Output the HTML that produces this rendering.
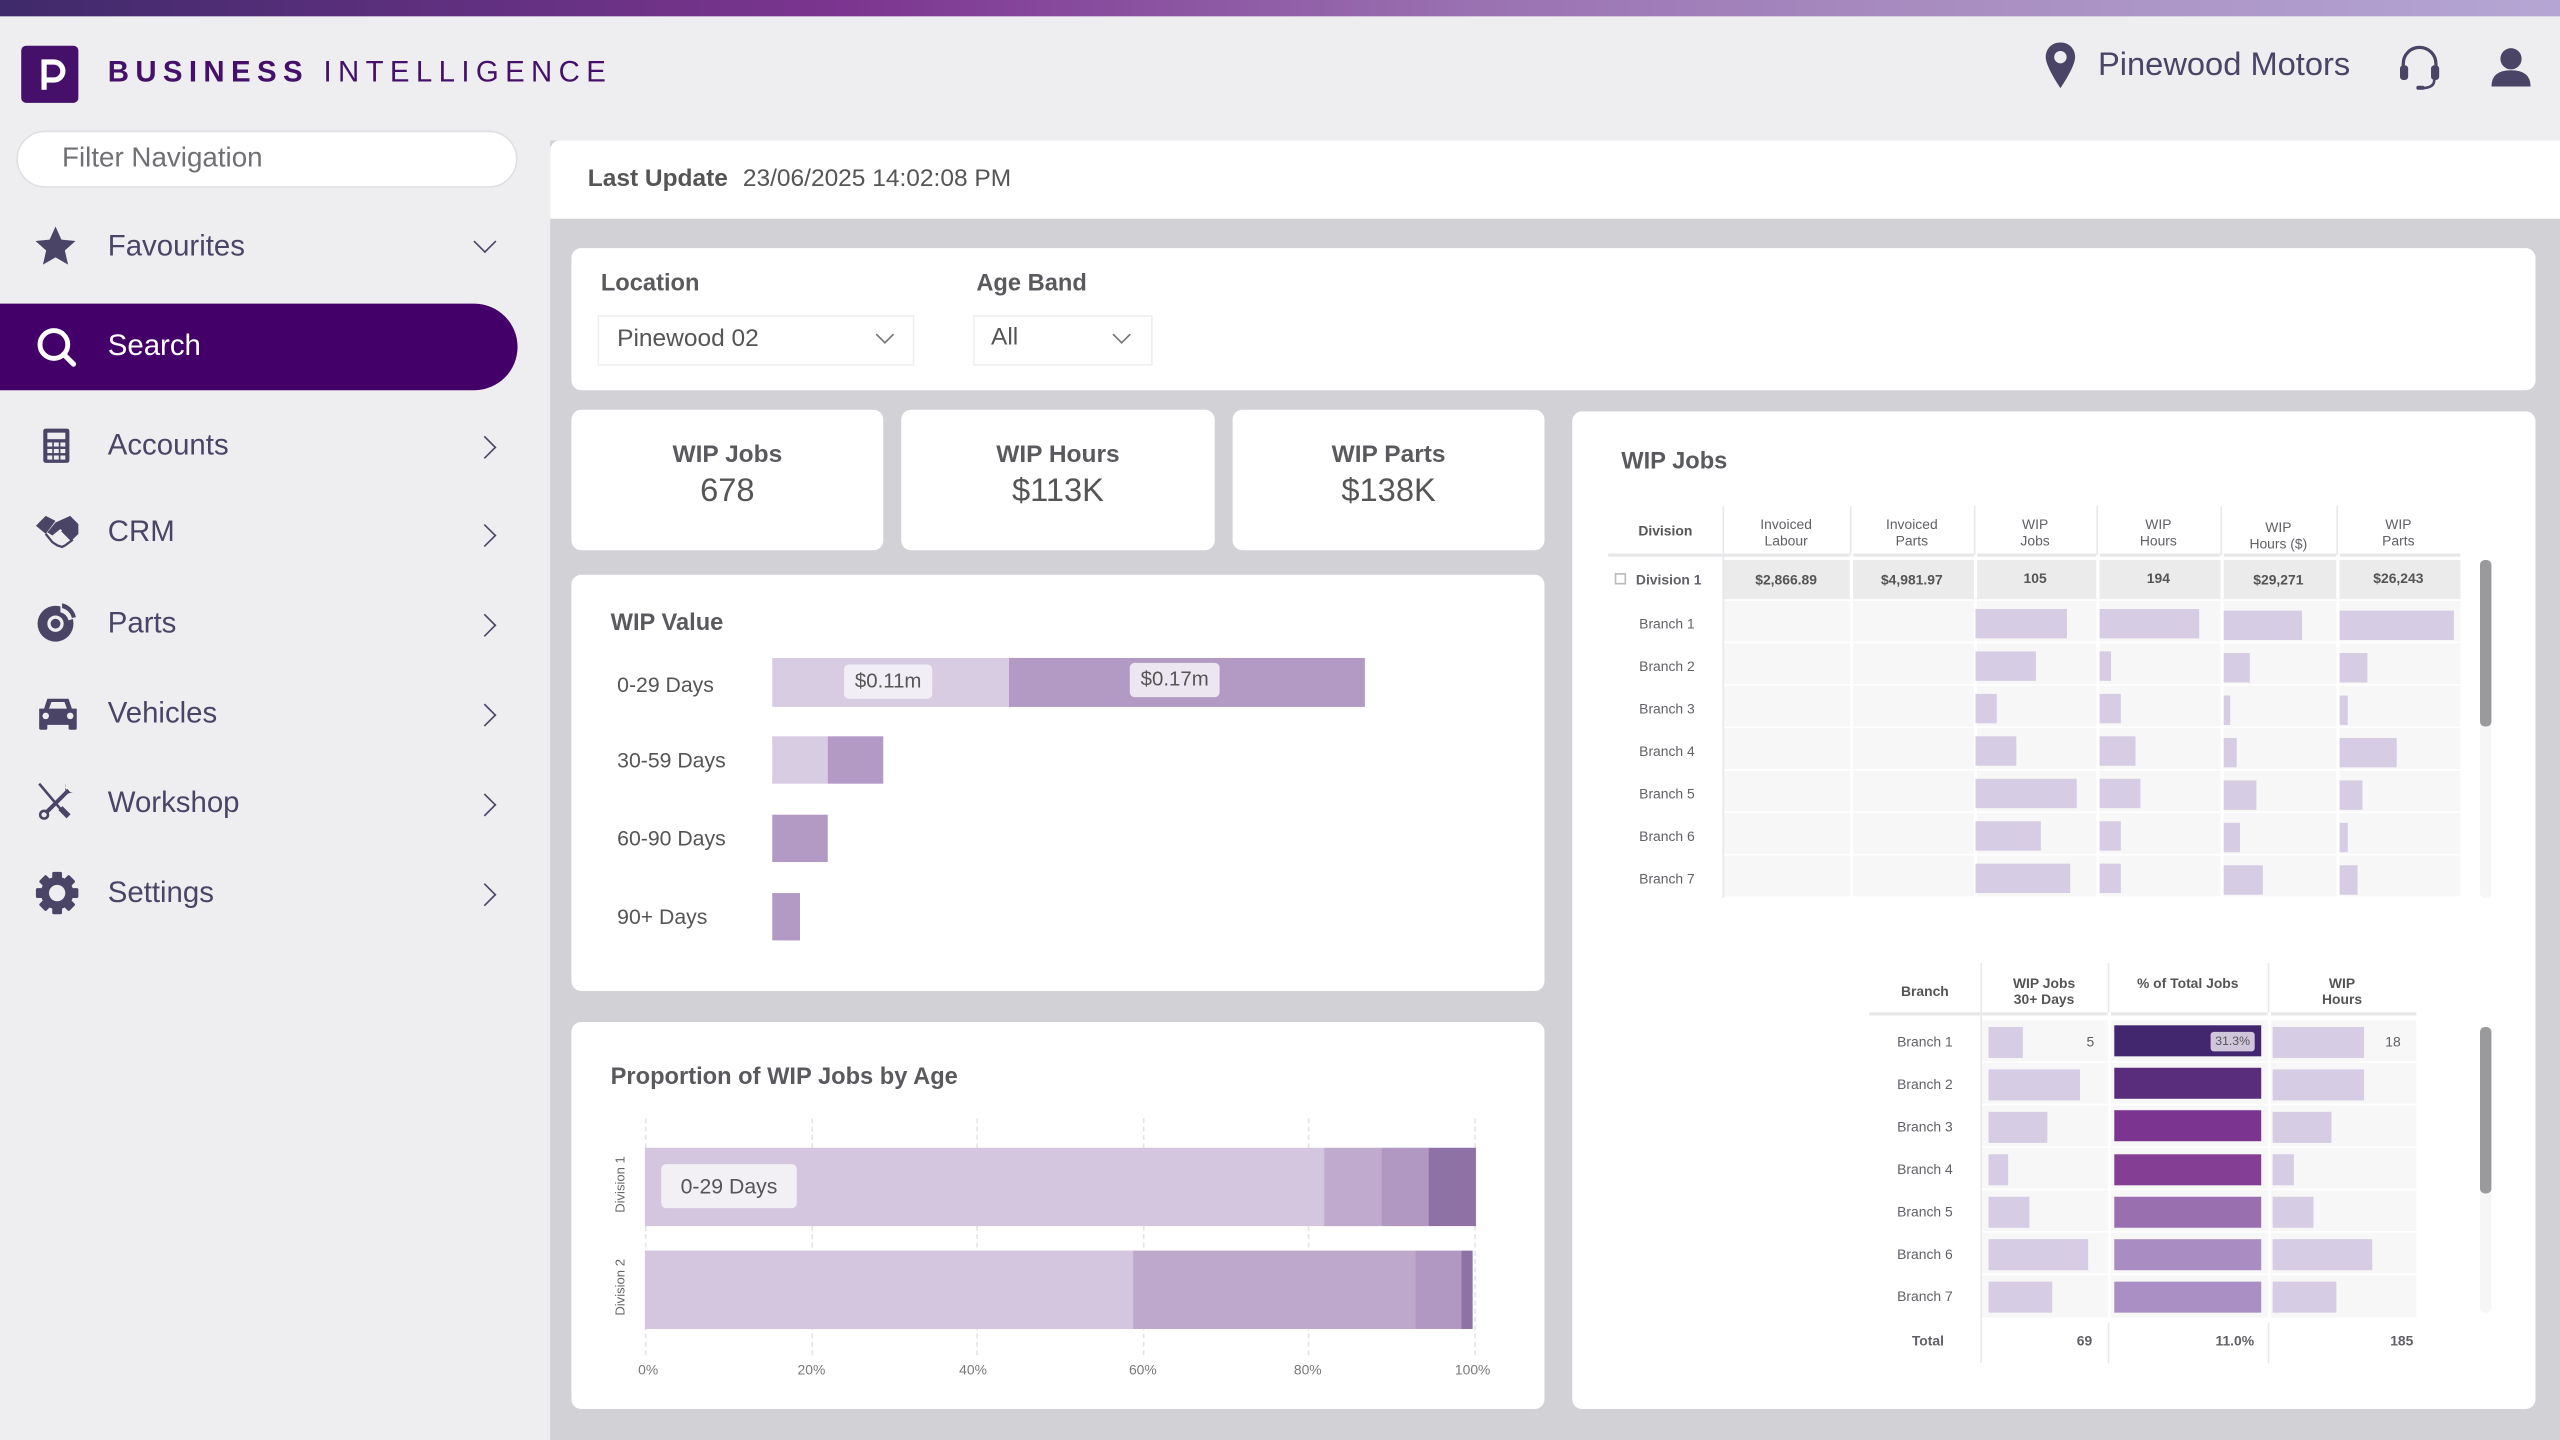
<!DOCTYPE html>
<html><head><meta charset="utf-8"><style>
*{margin:0;padding:0;box-sizing:border-box}
html,body{width:2560px;height:1440px;overflow:hidden;background:#eeeef0}
#w{position:absolute;left:0;top:0;width:1568px;height:882px;transform:scale(1.632653);transform-origin:0 0;font-family:"Liberation Sans",sans-serif;color:#4a4566}
.a{position:absolute}
.card{position:absolute;background:#fff;border-radius:6px}
.nav{position:absolute;left:66px;font-size:18px;color:#4a4566;transform:translateY(-50%)}
.chev{position:absolute;left:292px;width:10px;height:10px;border-right:1.6px solid #4a4566;border-bottom:1.6px solid #4a4566;transform:rotate(-45deg)}
.h{font-weight:bold;color:#5a5a5e}
.t{position:absolute;font-size:8.5px;color:#606066;text-align:center;line-height:10px}
.tb{font-weight:bold;color:#555}
.bar{position:absolute;background:#d6cce3}
.rl{position:absolute;font-size:8.5px;color:#606066}
.vl{position:absolute;width:1px;background:#e8e8ea}
</style></head><body><div id="w">
<div class="a" style="left:0;top:0;width:1568px;height:10px;background:linear-gradient(90deg,#3f2a6b 0%,#7c3590 33%,#9a72b2 58%,#a88cc0 75%,#b4a6d4 100%)"></div>
<div class="a" style="left:13px;top:28px;width:35px;height:35px;background:#44106a;border-radius:3px"></div>
<svg class="a" style="left:13px;top:28px" width="35" height="35" viewBox="0 0 35 35"><path d="M14 27V10h6a5.5 5.5 0 0 1 0 11h-6" fill="none" stroke="#fff" stroke-width="3.2"/></svg>
<div class="a" style="left:66px;top:34px;font-size:18px;letter-spacing:3.9px;color:#44106a;white-space:nowrap"><b>BUSINESS</b> INTELLIGENCE</div>
<svg class="a" style="left:1251px;top:25px" width="22" height="30" viewBox="0 0 22 30"><path d="M11 1C5.5 1 2 5 2 10c0 6 9 19 9 19s9-13 9-19c0-5-3.5-9-9-9z" fill="#4a4566"/><circle cx="11" cy="10" r="3.8" fill="#eeeef0"/></svg>
<div class="a" style="left:1285px;top:29px;font-size:20px;color:#4a4566">Pinewood Motors</div>
<svg class="a" style="left:1467px;top:26px" width="30" height="30" viewBox="0 0 30 30"><path d="M5 17v-4a10 10 0 0 1 20 0v4" fill="none" stroke="#4a4566" stroke-width="2"/><rect x="3" y="14" width="5" height="9" rx="2" fill="#4a4566"/><rect x="22" y="14" width="5" height="9" rx="2" fill="#4a4566"/><path d="M24 23q0 5-8 5" fill="none" stroke="#4a4566" stroke-width="1.6"/><rect x="13" y="26.5" width="5" height="2.5" rx="1.2" fill="#4a4566"/></svg>
<svg class="a" style="left:1524px;top:27px" width="28" height="28" viewBox="0 0 28 28"><circle cx="14" cy="9" r="6.5" fill="#4a4566"/><path d="M2 26q0-10 12-10t12 10z" fill="#4a4566"/></svg>
<div class="a" style="left:10px;top:80px;width:307px;height:35px;background:#fff;border-radius:18px;border:1px solid #e0e0e4"></div>
<div class="a" style="left:38px;top:87px;font-size:17px;color:#707074">Filter Navigation</div>
<svg class="a" style="left:20px;top:137px" width="28" height="28" viewBox="0 0 24 24"><path d="M12 1.5l3.1 6.9 7.4.7-5.6 5 1.7 7.4L12 17.7 5.4 21.5l1.7-7.4-5.6-5 7.4-.7z" fill="#4a4566"/></svg>
<div class="nav" style="top:151px">Favourites</div>
<div class="a" style="left:292px;top:143px;width:10px;height:10px;border-right:1.6px solid #4a4566;border-bottom:1.6px solid #4a4566;transform:rotate(45deg)"></div>
<div class="a" style="left:0;top:186px;width:317px;height:53px;background:#430069;border-radius:0 27px 27px 0"></div>
<svg class="a" style="left:21px;top:199px" width="28" height="28" viewBox="0 0 28 28"><circle cx="12" cy="12" r="8.5" fill="none" stroke="#fff" stroke-width="3"/><path d="M18 18l6 6" stroke="#fff" stroke-width="3.2" stroke-linecap="round"/></svg>
<div class="nav" style="top:212px;color:#fff">Search</div>
<svg class="a" style="left:26px;top:262px" width="17" height="22" viewBox="0 0 17 22"><rect x="0.5" y="0.5" width="16" height="21" rx="1.5" fill="#4a4566"/><rect x="3" y="3" width="11" height="4" fill="#eeeef0"/><g fill="#eeeef0"><rect x="3" y="9" width="3" height="2.5"/><rect x="7" y="9" width="3" height="2.5"/><rect x="11" y="9" width="3" height="2.5"/><rect x="3" y="13" width="3" height="2.5"/><rect x="7" y="13" width="3" height="2.5"/><rect x="11" y="13" width="3" height="2.5"/><rect x="3" y="17" width="3" height="2.5"/><rect x="7" y="17" width="3" height="2.5"/><rect x="11" y="17" width="3" height="2.5"/></g></svg>
<div class="nav" style="top:273px">Accounts</div><div class="chev" style="top:269px"></div>
<svg class="a" style="left:21px;top:314px" width="28" height="24" viewBox="0 0 28 24"><path d="M1 8l6-6 6 3-6 8z" fill="#4a4566"/><path d="M27 7l-5-5-9 4-5 6 3 2 5-4 7 7 4-4z" fill="#4a4566"/><path d="M7 13l4 5 3 2 3 1 2-1 4-3-6-6" fill="none" stroke="#4a4566" stroke-width="1.4"/></svg>
<div class="nav" style="top:326px">CRM</div><div class="chev" style="top:323px"></div>
<svg class="a" style="left:22px;top:368px" width="26" height="26" viewBox="0 0 26 26"><circle cx="12" cy="14" r="11" fill="#4a4566"/><circle cx="12" cy="14" r="5" fill="#eeeef0"/><circle cx="12" cy="14" r="3" fill="#4a4566"/><path d="M15 3a10 10 0 0 1 8 8l-3 1a7 7 0 0 0-5-5z" fill="#eeeef0"/><path d="M16 1.5a11 11 0 0 1 8.5 8.5l-2.5 0.5a8 8 0 0 0-6-6z" fill="#4a4566"/></svg>
<div class="nav" style="top:382px">Parts</div><div class="chev" style="top:378px"></div>
<svg class="a" style="left:22px;top:426px" width="27" height="22" viewBox="0 0 27 22"><path d="M5 8l2-6h13l2 6h3v10H2V8z" fill="#4a4566"/><path d="M8 8l1.5-4h8l1.5 4z" fill="#eeeef0"/><circle cx="6" cy="12.5" r="2" fill="#eeeef0"/><circle cx="21" cy="12.5" r="2" fill="#eeeef0"/><rect x="2" y="17" width="5" height="4" rx="1" fill="#4a4566"/><rect x="20" y="17" width="5" height="4" rx="1" fill="#4a4566"/></svg>
<div class="nav" style="top:437px">Vehicles</div><div class="chev" style="top:433px"></div>
<svg class="a" style="left:22px;top:478px" width="26" height="26" viewBox="0 0 26 26"><path d="M2 2l16 19" stroke="#4a4566" stroke-width="1.6"/><path d="M15 17l5 5" stroke="#4a4566" stroke-width="3.5"/><path d="M6 20L20 6" stroke="#4a4566" stroke-width="2.4"/><path d="M18 2a4 4 0 0 0 5 5l-3 1-2-2z" fill="#4a4566"/><circle cx="5" cy="21" r="2.4" fill="none" stroke="#4a4566" stroke-width="1.6"/></svg>
<div class="nav" style="top:492px">Workshop</div><div class="chev" style="top:488px"></div>
<svg class="a" style="left:21px;top:533px" width="28" height="28" viewBox="0 0 28 28"><g fill="#4a4566"><circle cx="14" cy="14" r="10"/><rect x="11" y="1" width="6" height="26" rx="1"/><rect x="11" y="1" width="6" height="26" rx="1" transform="rotate(45 14 14)"/><rect x="11" y="1" width="6" height="26" rx="1" transform="rotate(90 14 14)"/><rect x="11" y="1" width="6" height="26" rx="1" transform="rotate(135 14 14)"/></g><circle cx="14" cy="14" r="5" fill="#eeeef0"/></svg>
<div class="nav" style="top:547px">Settings</div><div class="chev" style="top:543px"></div>
<div class="a" style="left:337px;top:86px;width:1231px;height:796px;background:#d2d1d6"></div>
<div class="a" style="left:337px;top:86px;width:1231px;height:48px;background:#fff;border-radius:6px 0 0 0"></div>
<div class="a" style="left:360px;top:101px;font-size:15px;font-weight:bold;color:#555">Last Update</div>
<div class="a" style="left:455px;top:101px;font-size:15px;color:#555">23/06/2025 14:02:08 PM</div>
<div class="card" style="left:350px;top:152px;width:1203px;height:87px"></div>
<div class="a h" style="left:368px;top:166px;font-size:14.5px">Location</div>
<div class="a" style="left:366px;top:193px;width:194px;height:31px;border:1px solid #efeff1"></div>
<div class="a" style="left:378px;top:199px;font-size:15px;color:#555">Pinewood 02</div>
<div class="a" style="left:538px;top:201px;width:8px;height:8px;border-right:1px solid #777;border-bottom:1px solid #777;transform:rotate(45deg)"></div>
<div class="a h" style="left:598px;top:166px;font-size:14.5px">Age Band</div>
<div class="a" style="left:596px;top:193px;width:110px;height:31px;border:1px solid #efeff1"></div>
<div class="a" style="left:607px;top:198px;font-size:15px;color:#555">All</div>
<div class="a" style="left:683px;top:201px;width:8px;height:8px;border-right:1px solid #777;border-bottom:1px solid #777;transform:rotate(45deg)"></div>
<div class="card" style="left:350px;top:251px;width:191px;height:86px"></div>
<div class="card" style="left:552px;top:251px;width:192px;height:86px"></div>
<div class="card" style="left:755px;top:251px;width:191px;height:86px"></div>
<div class="a h" style="left:350px;width:191px;text-align:center;top:270px;font-size:15px">WIP Jobs</div>
<div class="a" style="left:350px;width:191px;text-align:center;top:290px;font-size:20px;color:#555">678</div>
<div class="a h" style="left:552px;width:192px;text-align:center;top:270px;font-size:15px">WIP Hours</div>
<div class="a" style="left:552px;width:192px;text-align:center;top:290px;font-size:20px;color:#555">$113K</div>
<div class="a h" style="left:755px;width:191px;text-align:center;top:270px;font-size:15px">WIP Parts</div>
<div class="a" style="left:755px;width:191px;text-align:center;top:290px;font-size:20px;color:#555">$138K</div>
<div class="card" style="left:350px;top:352px;width:596px;height:255px"></div>
<div class="a h" style="left:374px;top:374px;font-size:14.5px">WIP Value</div>
<div class="a" style="left:378px;top:412px;font-size:13px;color:#555">0-29 Days</div>
<div class="a" style="left:378px;top:458px;font-size:13px;color:#555">30-59 Days</div>
<div class="a" style="left:378px;top:506px;font-size:13px;color:#555">60-90 Days</div>
<div class="a" style="left:378px;top:554px;font-size:13px;color:#555">90+ Days</div>
<div class="a" style="left:473px;top:403px;width:145px;height:30px;background:#d8cce2"></div>
<div class="a" style="left:618px;top:403px;width:218px;height:30px;background:#b29ac4"></div>
<div class="a" style="left:517px;top:407px;width:54px;height:21px;background:#f2eef5;border-radius:3px;font-size:12.5px;color:#555;text-align:center;line-height:21px">$0.11m</div>
<div class="a" style="left:692px;top:406px;width:55px;height:21px;background:#ece6f0;border-radius:3px;font-size:12.5px;color:#555;text-align:center;line-height:21px">$0.17m</div>
<div class="a" style="left:473px;top:451px;width:34px;height:29px;background:#d8cce2"></div>
<div class="a" style="left:507px;top:451px;width:34px;height:29px;background:#b29ac4"></div>
<div class="a" style="left:473px;top:499px;width:34px;height:29px;background:#b29ac4"></div>
<div class="a" style="left:473px;top:547px;width:17px;height:29px;background:#b29ac4"></div>
<div class="card" style="left:350px;top:626px;width:596px;height:237px"></div>
<div class="a h" style="left:374px;top:652px;font-size:14.5px">Proportion of WIP Jobs by Age</div>
<div class="a" style="left:395px;top:685px;height:145px;border-left:1px dashed #e4e4e8"></div>
<div class="a" style="left:497px;top:685px;height:145px;border-left:1px dashed #e4e4e8"></div>
<div class="a" style="left:598px;top:685px;height:145px;border-left:1px dashed #e4e4e8"></div>
<div class="a" style="left:700px;top:685px;height:145px;border-left:1px dashed #e4e4e8"></div>
<div class="a" style="left:801px;top:685px;height:145px;border-left:1px dashed #e4e4e8"></div>
<div class="a" style="left:903px;top:685px;height:145px;border-left:1px dashed #e4e4e8"></div>
<div class="a" style="left:395px;top:703px;width:416px;height:48px;background:#d5c6df"></div>
<div class="a" style="left:811px;top:703px;width:35px;height:48px;background:#c0aacd"></div>
<div class="a" style="left:846px;top:703px;width:29px;height:48px;background:#b198c2"></div>
<div class="a" style="left:875px;top:703px;width:29px;height:48px;background:#8f72a5"></div>
<div class="a" style="left:395px;top:766px;width:299px;height:48px;background:#d5c6df"></div>
<div class="a" style="left:694px;top:766px;width:173px;height:48px;background:#bea9cd"></div>
<div class="a" style="left:867px;top:766px;width:28px;height:48px;background:#b198c2"></div>
<div class="a" style="left:895px;top:766px;width:7px;height:48px;background:#8f72a5"></div>
<div class="a" style="left:405px;top:713px;width:83px;height:27px;background:#f2eff5;border-radius:3px;font-size:13px;color:#555;text-align:center;line-height:27px">0-29 Days</div>
<div class="a" style="left:355px;top:721px;width:50px;text-align:center;font-size:8px;color:#666;transform:rotate(-90deg)">Division 1</div>
<div class="a" style="left:355px;top:784px;width:50px;text-align:center;font-size:8px;color:#666;transform:rotate(-90deg)">Division 2</div>
<div class="a" style="left:385px;width:24px;text-align:center;top:834px;font-size:8.5px;color:#777">0%</div>
<div class="a" style="left:485px;width:24px;text-align:center;top:834px;font-size:8.5px;color:#777">20%</div>
<div class="a" style="left:584px;width:24px;text-align:center;top:834px;font-size:8.5px;color:#777">40%</div>
<div class="a" style="left:688px;width:24px;text-align:center;top:834px;font-size:8.5px;color:#777">60%</div>
<div class="a" style="left:789px;width:24px;text-align:center;top:834px;font-size:8.5px;color:#777">80%</div>
<div class="a" style="left:889px;width:26px;text-align:center;top:834px;font-size:8.5px;color:#777">100%</div>
<div class="card" style="left:963px;top:252px;width:590px;height:611px"></div>
<div class="a h" style="left:993px;top:275px;font-size:14.5px">WIP Jobs</div>
<div class="a" style="left:1055px;top:343px;width:452px;height:24px;background:#ebebec"></div>
<div class="a" style="left:1055px;top:368px;width:452px;height:25px;background:#f7f7f7"></div>
<div class="a" style="left:1055px;top:394px;width:452px;height:25px;background:#f7f7f7"></div>
<div class="a" style="left:1055px;top:420px;width:452px;height:25px;background:#f7f7f7"></div>
<div class="a" style="left:1055px;top:446px;width:452px;height:25px;background:#f7f7f7"></div>
<div class="a" style="left:1055px;top:472px;width:452px;height:25px;background:#f7f7f7"></div>
<div class="a" style="left:1055px;top:498px;width:452px;height:25px;background:#f7f7f7"></div>
<div class="a" style="left:1055px;top:524px;width:452px;height:25px;background:#f7f7f7"></div>
<div class="a" style="left:985px;top:339px;width:522px;height:2px;background:#e8e8ea"></div>
<div class="vl" style="left:1055px;top:310px;height:240px"></div>
<div class="vl" style="left:1133px;top:310px;height:240px;background:#fff;width:2px"></div>
<div class="vl" style="left:1209px;top:310px;height:240px;background:#fff;width:2px"></div>
<div class="vl" style="left:1284px;top:310px;height:240px;background:#fff;width:2px"></div>
<div class="vl" style="left:1360px;top:310px;height:240px;background:#fff;width:2px"></div>
<div class="vl" style="left:1431px;top:310px;height:240px;background:#fff;width:2px"></div>
<div class="vl" style="left:1133px;top:310px;height:30px"></div><div class="vl" style="left:1209px;top:310px;height:30px"></div><div class="vl" style="left:1284px;top:310px;height:30px"></div><div class="vl" style="left:1360px;top:310px;height:30px"></div><div class="vl" style="left:1431px;top:310px;height:30px"></div>
<div class="t tb" style="left:985px;width:70px;top:320px">Division</div>
<div class="t" style="left:1055px;width:78px;top:316px">Invoiced<br>Labour</div>
<div class="t" style="left:1133px;width:76px;top:316px">Invoiced<br>Parts</div>
<div class="t" style="left:1209px;width:75px;top:316px">WIP<br>Jobs</div>
<div class="t" style="left:1284px;width:76px;top:316px">WIP<br>Hours</div>
<div class="t" style="left:1360px;width:71px;top:318px">WIP<br>Hours ($)</div>
<div class="t" style="left:1431px;width:76px;top:316px">WIP<br>Parts</div>
<div class="a" style="left:989px;top:351px;width:7px;height:7px;border:1px solid #bbb"></div>
<div class="rl tb" style="left:1002px;top:350px">Division 1</div>
<div class="t tb" style="left:1055px;width:78px;top:350px">$2,866.89</div>
<div class="t tb" style="left:1133px;width:76px;top:350px">$4,981.97</div>
<div class="t tb" style="left:1209px;width:75px;top:349px">105</div>
<div class="t tb" style="left:1284px;width:76px;top:349px">194</div>
<div class="t tb" style="left:1360px;width:71px;top:350px">$29,271</div>
<div class="t tb" style="left:1431px;width:76px;top:349px">$26,243</div>
<div class="rl" style="left:1004px;top:377px">Branch 1</div>
<div class="rl" style="left:1004px;top:403px">Branch 2</div>
<div class="rl" style="left:1004px;top:429px">Branch 3</div>
<div class="rl" style="left:1004px;top:455px">Branch 4</div>
<div class="rl" style="left:1004px;top:481px">Branch 5</div>
<div class="rl" style="left:1004px;top:507px">Branch 6</div>
<div class="rl" style="left:1004px;top:533px">Branch 7</div>
<div class="bar" style="left:1210px;top:373px;width:56px;height:18px"></div>
<div class="bar" style="left:1210px;top:399px;width:37px;height:18px"></div>
<div class="bar" style="left:1210px;top:425px;width:13px;height:18px"></div>
<div class="bar" style="left:1210px;top:451px;width:25px;height:18px"></div>
<div class="bar" style="left:1210px;top:477px;width:62px;height:18px"></div>
<div class="bar" style="left:1210px;top:503px;width:40px;height:18px"></div>
<div class="bar" style="left:1210px;top:529px;width:58px;height:18px"></div>
<div class="bar" style="left:1286px;top:373px;width:61px;height:18px"></div>
<div class="bar" style="left:1286px;top:399px;width:7px;height:18px"></div>
<div class="bar" style="left:1286px;top:425px;width:13px;height:18px"></div>
<div class="bar" style="left:1286px;top:451px;width:22px;height:18px"></div>
<div class="bar" style="left:1286px;top:477px;width:25px;height:18px"></div>
<div class="bar" style="left:1286px;top:503px;width:13px;height:18px"></div>
<div class="bar" style="left:1286px;top:529px;width:13px;height:18px"></div>
<div class="bar" style="left:1362px;top:374px;width:48px;height:18px"></div>
<div class="bar" style="left:1362px;top:400px;width:16px;height:18px"></div>
<div class="bar" style="left:1362px;top:426px;width:4px;height:18px"></div>
<div class="bar" style="left:1362px;top:452px;width:8px;height:18px"></div>
<div class="bar" style="left:1362px;top:478px;width:20px;height:18px"></div>
<div class="bar" style="left:1362px;top:504px;width:10px;height:18px"></div>
<div class="bar" style="left:1362px;top:530px;width:24px;height:18px"></div>
<div class="bar" style="left:1433px;top:374px;width:70px;height:18px"></div>
<div class="bar" style="left:1433px;top:400px;width:17px;height:18px"></div>
<div class="bar" style="left:1433px;top:426px;width:5px;height:18px"></div>
<div class="bar" style="left:1433px;top:452px;width:35px;height:18px"></div>
<div class="bar" style="left:1433px;top:478px;width:14px;height:18px"></div>
<div class="bar" style="left:1433px;top:504px;width:5px;height:18px"></div>
<div class="bar" style="left:1433px;top:530px;width:11px;height:18px"></div>
<div class="a" style="left:1519px;top:343px;width:7px;height:207px;background:#f6f6f6;border-radius:3px"></div>
<div class="a" style="left:1519px;top:343px;width:7px;height:102px;background:#9a9a9c;border-radius:3px"></div>
<div class="a" style="left:1213px;top:625px;width:267px;height:182px;background:#f7f7f7"></div>
<div class="a" style="left:1145px;top:620px;width:335px;height:2px;background:#e8e8ea"></div>
<div class="vl" style="left:1291px;top:595px;height:240px;background:#fff;width:2px"></div>
<div class="vl" style="left:1389px;top:595px;height:240px;background:#fff;width:2px"></div>
<div class="a" style="left:1213px;top:650px;width:267px;height:1px;background:#fff"></div>
<div class="a" style="left:1213px;top:676px;width:267px;height:1px;background:#fff"></div>
<div class="a" style="left:1213px;top:702px;width:267px;height:1px;background:#fff"></div>
<div class="a" style="left:1213px;top:728px;width:267px;height:1px;background:#fff"></div>
<div class="a" style="left:1213px;top:754px;width:267px;height:1px;background:#fff"></div>
<div class="a" style="left:1213px;top:780px;width:267px;height:1px;background:#fff"></div>
<div class="vl" style="left:1213px;top:590px;height:245px"></div>
<div class="vl" style="left:1291px;top:590px;height:30px"></div><div class="vl" style="left:1389px;top:590px;height:30px"></div>
<div class="vl" style="left:1291px;top:810px;height:25px"></div><div class="vl" style="left:1389px;top:810px;height:25px"></div>
<div class="t tb" style="left:1145px;width:68px;top:602px">Branch</div>
<div class="t tb" style="left:1213px;width:78px;top:597px">WIP Jobs<br>30+ Days</div>
<div class="t tb" style="left:1291px;width:98px;top:597px">% of Total Jobs</div>
<div class="t tb" style="left:1389px;width:91px;top:597px">WIP<br>Hours</div>
<div class="rl" style="left:1162px;top:633px">Branch 1</div>
<div class="rl" style="left:1162px;top:659px">Branch 2</div>
<div class="rl" style="left:1162px;top:685px">Branch 3</div>
<div class="rl" style="left:1162px;top:711px">Branch 4</div>
<div class="rl" style="left:1162px;top:737px">Branch 5</div>
<div class="rl" style="left:1162px;top:763px">Branch 6</div>
<div class="rl" style="left:1162px;top:789px">Branch 7</div>
<div class="rl tb" style="left:1171px;top:816px">Total</div>
<div class="rl tb" style="left:1272px;top:816px">69</div>
<div class="rl tb" style="left:1357px;top:816px">11.0%</div>
<div class="rl tb" style="left:1464px;top:816px">185</div>
<div class="bar" style="left:1218px;top:629px;width:21px;height:19px"></div>
<div class="bar" style="left:1218px;top:655px;width:56px;height:19px"></div>
<div class="bar" style="left:1218px;top:681px;width:36px;height:19px"></div>
<div class="bar" style="left:1218px;top:707px;width:12px;height:19px"></div>
<div class="bar" style="left:1218px;top:733px;width:25px;height:19px"></div>
<div class="bar" style="left:1218px;top:759px;width:61px;height:19px"></div>
<div class="bar" style="left:1218px;top:785px;width:39px;height:19px"></div>
<div class="rl" style="left:1278px;top:633px">5</div>
<div class="a" style="left:1295px;top:628px;width:90px;height:19px;background:#42266e"></div>
<div class="a" style="left:1295px;top:654px;width:90px;height:19px;background:#5a2c7c"></div>
<div class="a" style="left:1295px;top:680px;width:90px;height:19px;background:#7b348f"></div>
<div class="a" style="left:1295px;top:707px;width:90px;height:19px;background:#843f95"></div>
<div class="a" style="left:1295px;top:733px;width:90px;height:19px;background:#9a6fb0"></div>
<div class="a" style="left:1295px;top:759px;width:90px;height:19px;background:#a98cc2"></div>
<div class="a" style="left:1295px;top:785px;width:90px;height:19px;background:#a98fc3"></div>
<div class="a" style="left:1354px;top:632px;width:27px;height:12px;background:#cfc6dc;border-radius:2px;font-size:7.5px;color:#555;text-align:center;line-height:12px">31.3%</div>
<div class="bar" style="left:1392px;top:629px;width:56px;height:19px"></div>
<div class="bar" style="left:1392px;top:655px;width:56px;height:19px"></div>
<div class="bar" style="left:1392px;top:681px;width:36px;height:19px"></div>
<div class="bar" style="left:1392px;top:707px;width:13px;height:19px"></div>
<div class="bar" style="left:1392px;top:733px;width:25px;height:19px"></div>
<div class="bar" style="left:1392px;top:759px;width:61px;height:19px"></div>
<div class="bar" style="left:1392px;top:785px;width:39px;height:19px"></div>
<div class="rl" style="left:1461px;top:633px">18</div>
<div class="a" style="left:1519px;top:629px;width:7px;height:175px;background:#f6f6f6;border-radius:3px"></div>
<div class="a" style="left:1519px;top:629px;width:7px;height:102px;background:#9a9a9c;border-radius:3px"></div>
</div></body></html>
